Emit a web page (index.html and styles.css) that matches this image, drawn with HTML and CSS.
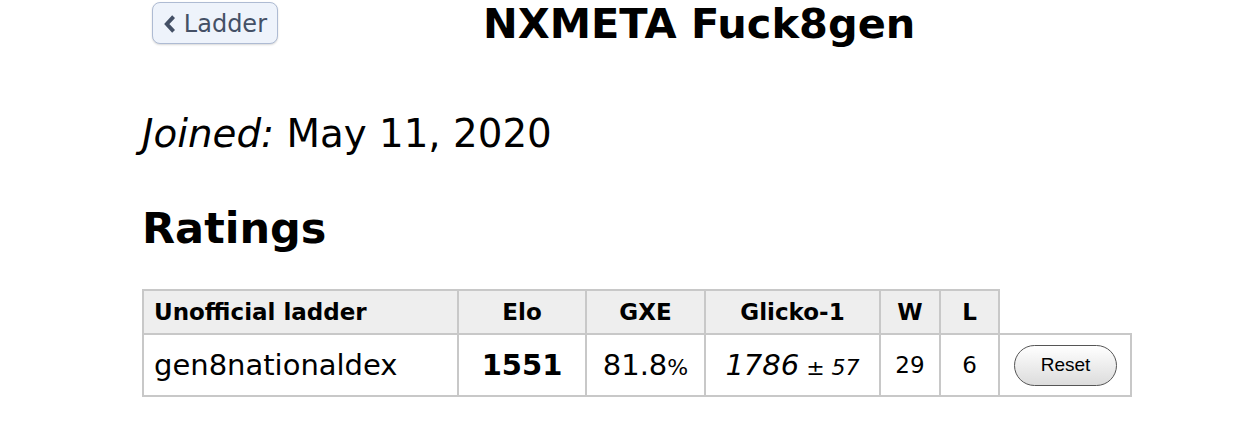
FILE: index.html
```html
<!DOCTYPE html>
<html lang="en">
<head>
    <meta charset="UTF-8">
    <meta name="viewport" content="width=device-width, initial-scale=1.0">
    <title>NXMETA Fuck8gen</title>
    <link rel="stylesheet" href="styles.css">
</head>
<body>

    <div class="page">
        <div class="top">
            <a class="back" href="#">
                <svg class="chev" width="14" height="20" viewBox="0 0 14 20">
                    <path d="M11 3 L4.5 10 L11 17" fill="none" stroke="#445066" stroke-width="4.6" stroke-linecap="square" stroke-linejoin="miter"/>
                </svg>
                Ladder
            </a>
            <h1>NXMETA Fuck8gen</h1>
        </div>

        <p class="joined"><em>Joined:</em> May 11, 2020</p>

        <h2>Ratings</h2>

        <table class="ratings">
            <colgroup>
                <col style="width: 315px">
                <col style="width: 128px">
                <col style="width: 119px">
                <col style="width: 175px">
                <col style="width: 60px">
                <col style="width: 59px">
                <col style="width: 132px">
            </colgroup>
            <thead>
                <tr>
                    <th class="left">Unofficial ladder</th>
                    <th>Elo</th>
                    <th>GXE</th>
                    <th>Glicko-1</th>
                    <th>W</th>
                    <th>L</th>
                </tr>
            </thead>
            <tbody>
                <tr>
                    <td class="left">gen8nationaldex</td>
                    <td><strong>1551</strong></td>
                    <td>81.8<small>%</small></td>
                    <td><em>1786<small> &plusmn; 57</small></em></td>
                    <td class="count">29</td>
                    <td class="count">6</td>
                    <td class="action"><button class="reset">Reset</button></td>
                </tr>
            </tbody>
        </table>
    </div>

</body>
</html>
```

FILE: styles.css
```css
body {
    margin: 0;
    font-family: "DejaVu Sans", Verdana, sans-serif;
    color: #000;
    background: #fff;
}

.page {
    padding-left: 142px;
}

.top {
    display: flex;
    align-items: flex-start;
    padding-top: 2px;
}

.back {
    display: flex;
    align-items: center;
    gap: 9px;
    margin-left: 10px;
    padding: 2px 10px 0 10px;
    box-sizing: border-box;
    width: 126px;
    height: 42px;
    border: 1.5px solid #aebbd3;
    border-radius: 8px;
    background: #eef3fb;
    box-shadow: 0 1px 2px rgba(0, 0, 0, 0.15);
    color: #445066;
    font-size: 24px;
    text-decoration: none;
}

h1 {
    margin: 0 0 0 205px;
    font-size: 41.5px;
    line-height: 44px;
    font-weight: bold;
}

.joined {
    margin: 66px 0 0 0;
    font-size: 38.8px;
    line-height: 44px;
}

h2 {
    margin: 47px 0 0 0;
    font-size: 43px;
    line-height: 50px;
}

.ratings {
    margin-top: 36px;
    border-collapse: collapse;
    table-layout: fixed;
    width: 988px;
}

.ratings th,
.ratings td {
    border: 2px solid #c8c8c8;
    padding: 0 10px;
    text-align: center;
    white-space: nowrap;
}

.ratings th {
    height: 42px;
    background: #eeeeee;
    font-size: 23px;
}

.ratings td {
    height: 60px;
    font-size: 29px;
}

.ratings td.count {
    font-size: 23px;
}

.ratings .left {
    text-align: left;
}

.ratings small {
    font-size: 22px;
}

.ratings td.action {
    text-align: left;
    padding-left: 14px;
}

.reset {
    width: 103px;
    height: 41px;
    border: 1.5px solid #555;
    border-radius: 21px;
    background: linear-gradient(#ffffff, #dcdcdc);
    font-family: "Liberation Sans", Arial, sans-serif;
    font-size: 19px;
    color: #000;
}
```
